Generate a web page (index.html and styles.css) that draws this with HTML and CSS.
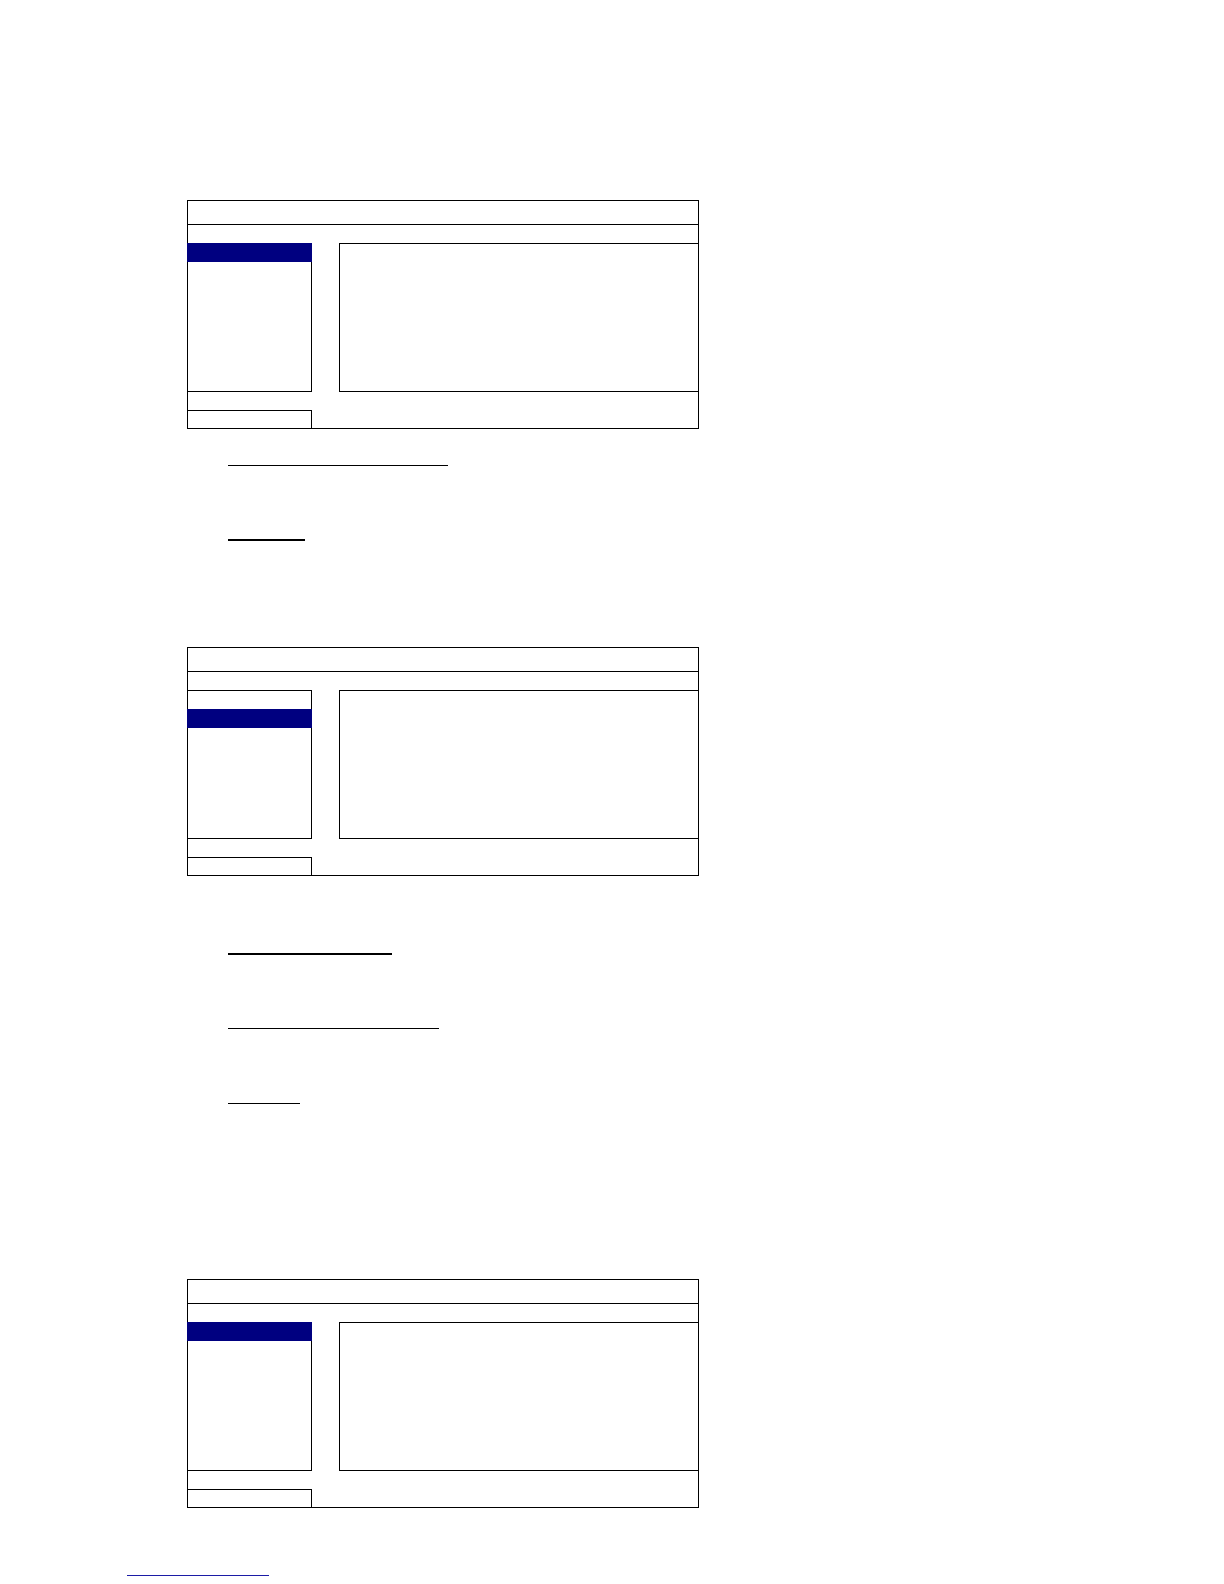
FILE: index.html
```html
<!DOCTYPE html>
<html lang="en">
<head>
<meta charset="utf-8">
<title>Menu screens</title>
<link rel="stylesheet" href="styles.css">
</head>
<body>
<main class="page">
  <section class="panel">
    <div class="panel-title"></div>
    <div class="panel-gap"></div>
    <div class="panel-body">
      <ul class="side">
        <li class="item sel first"></li>
      </ul>
      <div class="content"></div>
    </div>
    <div class="panel-gap"></div>
    <div class="mini"></div>
  </section>

  <div class="rule thin r1"></div>
  <div class="rule thick r2"></div>

  <section class="panel p2">
    <div class="panel-title"></div>
    <div class="panel-gap"></div>
    <div class="panel-body">
      <ul class="side">
        <li class="item"></li>
        <li class="item sel"></li>
      </ul>
      <div class="content"></div>
    </div>
    <div class="panel-gap"></div>
    <div class="mini"></div>
  </section>

  <div class="rule thick r3"></div>
  <div class="rule thin r4"></div>
  <div class="rule thin r5"></div>

  <section class="panel p3">
    <div class="panel-title"></div>
    <div class="panel-gap"></div>
    <div class="panel-body">
      <ul class="side">
        <li class="item sel first"></li>
      </ul>
      <div class="content"></div>
    </div>
    <div class="panel-gap"></div>
    <div class="mini"></div>
  </section>

  <div class="link-rule"></div>
</main>
</body>
</html>
```

FILE: styles.css
```css
* { box-sizing: border-box; }

html, body {
  margin: 0;
  padding: 0;
  background: #ffffff;
  font-family: "Liberation Sans", Arial, sans-serif;
}

.page {
  width: 1224px;
  min-height: 1584px;
  padding-top: 200px;
  display: flex;
  flex-direction: column;
  align-items: flex-start;
}

.panel {
  margin-left: 187px;
  width: 512px;
  height: 229px;
  border: 1px solid #000;
  display: flex;
  flex-direction: column;
}

.p2 { margin-top: 106px; }
.p3 { margin-top: 175px; }

.panel-title {
  height: 24px;
  border-bottom: 1px solid #000;
  flex: none;
}

.panel-gap {
  height: 18px;
  flex: none;
}

.panel-body {
  display: flex;
  height: 149px;
  flex: none;
  gap: 27px;
}

.side {
  list-style: none;
  margin: 0;
  padding: 0;
  width: 124px;
  border-top: 1px solid #000;
  border-bottom: 1px solid #000;
  border-right: 1px solid #000;
  display: flex;
  flex-direction: column;
}

.item {
  height: 18px;
  flex: none;
}

.item.sel {
  background: #000080;
  height: 19px;
  margin-right: -1px;
  margin-left: -1px;
}

.item.sel.first {
  margin-top: -1px;
}

.content {
  flex: 1;
  border-top: 1px solid #000;
  border-bottom: 1px solid #000;
  border-left: 1px solid #000;
}

.mini {
  width: 124px;
  height: 18px;
  border-top: 1px solid #000;
  border-right: 1px solid #000;
  flex: none;
}

.rule {
  margin-left: 228px;
  border-top: 1px solid #000;
}

.rule.thick { border-top-width: 2px; }

.r1 { width: 220px; margin-top: 36px; }
.r2 { width: 77px; margin-top: 73px; }
.r3 { width: 164px; margin-top: 77px; }
.r4 { width: 211px; margin-top: 73px; }
.r5 { width: 72px; margin-top: 74px; }

.link-rule {
  margin-left: 127px;
  margin-top: 67px;
  width: 142px;
  border-top: 1px solid #1c1ca6;
}
```
